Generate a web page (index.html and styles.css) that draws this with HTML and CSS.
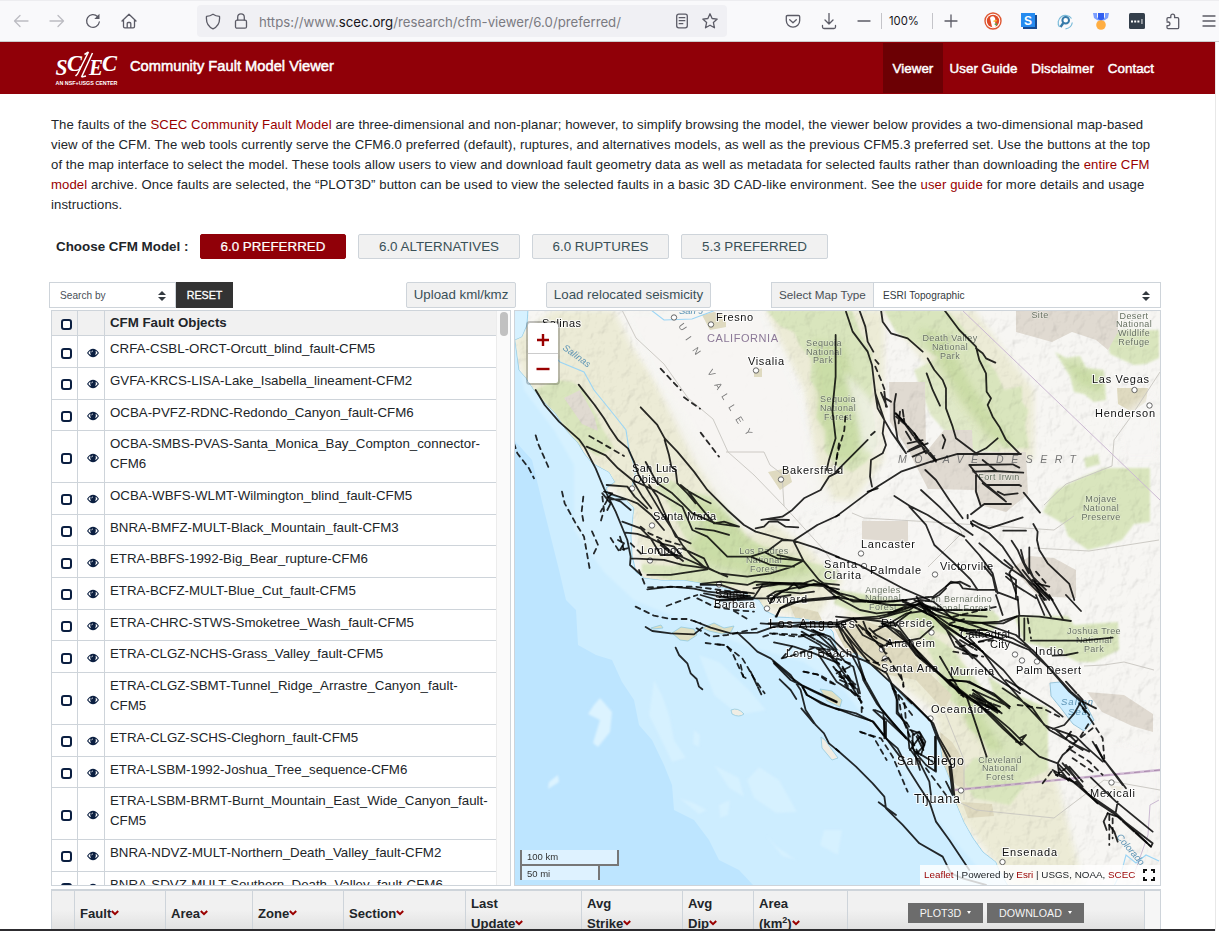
FILE: index.html
```html
<!DOCTYPE html>
<html lang="en">
<head>
<meta charset="utf-8">
<title>Community Fault Model Viewer</title>
<link rel="stylesheet" href="styles.css">
</head>
<body>
<svg width="0" height="0" class="defs" aria-hidden="true">
  <symbol id="eye" viewBox="0 0 12 10"><path d="M0 5Q6-3.400 12 5Q6 13.400 0 5Z" fill="#0b1f41"/><path d="M1.300 5Q2.300 3.200 3.400 2.700Q2.600 5.300 4 7.100Q2.300 6.500 1.300 5ZM10.700 5Q9.700 3.200 8.600 2.700Q9.400 5.300 8 7.100Q9.700 6.500 10.700 5Z" fill="#fff"/><path d="M4.500 4.300Q4.700 3 6 2.900" stroke="#fff" stroke-width=".7" fill="none"/></symbol>
  <symbol id="sort" viewBox="0 0 8 10"><path d="M0 4L4 0L8 4ZM0 6L4 10L8 6Z" fill="#343a40"/></symbol>
  <symbol id="chev" viewBox="0 0 8 6"><path d="M.8 1L4 4.200L7.200 1" fill="none" stroke="#990000" stroke-width="2"/></symbol>
</svg>

<div class="toolbar">
  <span class="tool"><svg width="16" height="16" viewBox="0 0 16 16" class="dim"><path d="M15 8H1.500M7 2.500L1.500 8L7 13.500"/></svg></span>
  <span class="tool"><svg width="16" height="16" viewBox="0 0 16 16" class="dim"><path d="M1 8H14.500M9 2.500L14.500 8L9 13.500"/></svg></span>
  <span class="tool"><svg width="16" height="16" viewBox="0 0 16 16"><path d="M14.300 9A6.400 6.400 0 1 1 12.500 3.500"/><path d="M14.500 .8V6H9.300Z" class="solid"/></svg></span>
  <span class="tool"><svg width="16" height="16" viewBox="0 0 16 16"><path d="M1 8L8 1.300L15 8M2.500 7V13.500Q2.500 14.800 3.800 14.800H12.200Q13.500 14.800 13.500 13.500V7M6.200 14.500V10.500Q6.200 9.500 7.200 9.500H8.800Q9.800 9.500 9.800 10.500V14.500"/></svg></span>
  <div class="urlbar">
    <span class="tool small"><svg width="16" height="17" viewBox="0 0 16 17"><path d="M8 1.200C10 2.600 12 3.200 14.500 3.300C15 8.500 13.500 13.500 8 15.800C2.500 13.500 1 8.500 1.500 3.300C4 3.200 6 2.600 8 1.200Z"/></svg></span>
    <span class="tool small"><svg width="14" height="17" viewBox="0 0 14 17"><rect x="1.500" y="7.200" width="11" height="8" rx="1.500"/><path d="M3.700 7V4.200A3.300 3.300 0 0 1 10.300 4.200V7"/></svg></span>
    <span class="url">https://www.<b>scec.org</b>/research/cfm-viewer/6.0/preferred/</span>
    <span class="tool small"><svg width="14" height="16" viewBox="0 0 14 16"><rect x="1.700" y="1.200" width="10.600" height="13.600" rx="2"/><path d="M4.200 4.700H9.800M4.200 7.700H9.800M4.200 10.700H7.800"/></svg></span>
    <span class="tool small"><svg width="16" height="16" viewBox="0 0 16 16"><path d="M8 .8L10.100 5.500L15.200 6.100L11.400 9.600L12.500 14.800L8 12.200L3.500 14.800L4.600 9.600L.8 6.100L5.900 5.500Z"/></svg></span>
  </div>
  <div class="tools">
    <span class="tool"><svg width="16" height="15" viewBox="0 0 16 15"><path d="M2.500 1.500H13.500Q14.700 1.500 14.700 2.700V6.500A6.700 6.700 0 0 1 1.300 6.500V2.700Q1.300 1.500 2.500 1.500ZM4.700 5.700L8 8.800L11.300 5.700"/></svg></span>
    <span class="tool"><svg width="16" height="17" viewBox="0 0 16 17"><path d="M8 .5V11M4 7L8 11L12 7M1.500 12.500V14Q1.500 15.500 3 15.500H13Q14.500 15.500 14.500 14V12.500"/></svg></span>
    <span class="tool minus"><svg width="14" height="14" viewBox="0 0 14 14"><path d="M1 7H13"/></svg></span>
    <span class="zoom">100%</span>
    <span class="tool"><svg width="14" height="14" viewBox="0 0 14 14"><path d="M1 7H13M7 1V13"/></svg></span>
    <span class="tool ddg"><svg width="18" height="18" viewBox="0 0 18 18" class="plain"><circle cx="9" cy="9" r="8" fill="#fff" stroke="#de5833" stroke-width="1.400"/><circle cx="9" cy="9" r="6.200" fill="#de4a26"/><path d="M6 6Q7 3.500 9.800 4.500Q12 6 11 9.500L12 14.600Q9.500 15.800 8 14.800Z" fill="#fff"/><path d="M9.500 8.500L13 7.800L12.500 9.500L9.500 10Z" fill="#f7b733"/><path d="M10 12L13 11V14Z" fill="#5ba14b"/></svg></span>
    <span class="tool"><svg width="16" height="16" viewBox="0 0 16 16" class="plain"><path d="M2 2H16V16H2Z" fill="#174a91"/><path d="M0 0H14V14H0Z" fill="#258bf0"/><text x="7" y="11.500" text-anchor="middle" class="s-logo">S</text></svg></span>
    <span class="tool"><svg width="16" height="17" viewBox="0 0 16 17" class="plain"><path d="M2.500 14A7.200 7.200 0 1 1 14.500 5.500" fill="none" stroke="#7abbd9" stroke-width="1.200"/><circle cx="8.700" cy="7.300" r="3.300" fill="#fff" stroke="#367aa9" stroke-width="2"/><path d="M6.300 10L3.500 14" stroke="#367aa9" stroke-width="2.300"/><path d="M8.500 15.800Q14.500 15 15.300 9.500" fill="none" stroke="#7abbd9" stroke-width="1.200"/></svg></span>
    <span class="tool"><svg width="16" height="17" viewBox="0 0 16 17" class="plain"><path d="M0 0H4V4L7 8L4 7L1 5ZM16 0H12V4L9 8L12 7L15 5Z" fill="#7b9fff"/><path d="M5 0H11V6L8 8L5 6Z" fill="#315ff0"/><circle cx="8" cy="12" r="4.800" fill="#ffae42"/></svg></span>
    <span class="tool"><svg width="16" height="16" viewBox="0 0 16 16" class="plain"><rect width="16" height="16" rx="1.500" fill="#343f4b"/><path d="M2 7.500h2v2H2zM5.200 7.500h2v2h-2zM8.400 7.500h2v2h-2zM12.500 6h.9v5h-.9z" fill="#fff"/></svg></span>
    <span class="tool"><svg width="16" height="17" viewBox="0 0 16 17"><path d="M2 7.500V5.800Q2 4.700 3 4.700H5.800V3A1.900 1.900 0 0 1 9.600 3V4.700H12.500Q13.700 4.700 13.700 6V14.500Q13.700 15.700 12.500 15.700H3Q2 15.700 2 14.600V12.700H3.500A1.900 1.900 0 0 0 3.500 9H2"/></svg></span>
    <span class="tool"><svg width="14" height="14" viewBox="0 0 14 14"><path d="M1 2H13M1 7H13M1 12H13"/></svg></span>
  </div>
</div>

<div class="page">
  <header class="masthead">
    <svg class="logo" width="64" height="38" viewBox="0 0 64 38">
      <g class="logo-text"><text x="0.500" y="26" font-size="24" textLength="12" lengthAdjust="spacingAndGlyphs">S</text><text x="12" y="21.500" font-size="23" textLength="15" lengthAdjust="spacingAndGlyphs">C</text><text x="34" y="26" font-size="23" textLength="14" lengthAdjust="spacingAndGlyphs">E</text><text x="47" y="21.500" font-size="23" textLength="15" lengthAdjust="spacingAndGlyphs">C</text></g>
      <path d="M33.500 3L22.500 25M37.500 4L26.500 28M29.500 5.500L33.500 3M22.500 25L20.500 27M26.500 28L31 27" stroke="#fff" stroke-width="1.500" fill="none"/>
      <text x="0.500" y="35.700" class="logo-caption" textLength="62" lengthAdjust="spacingAndGlyphs">AN NSF+USGS CENTER</text>
    </svg>
    <h1>Community Fault Model Viewer</h1>
    <nav>
      <a class="active">Viewer</a><a>User Guide</a><a>Disclaimer</a><a>Contact</a>
    </nav>
  </header>

  <main>
    <p class="intro">The faults of the <a>SCEC Community Fault Model</a> are three-dimensional and non-planar; however, to simplify browsing the model, the viewer below provides a two-dimensional map-based<br>view of the CFM. The web tools currently serve the CFM6.0 preferred (default), ruptures, and alternatives models, as well as the previous CFM5.3 preferred set. Use the buttons at the top<br>of the map interface to select the model. These tools allow users to view and download fault geometry data as well as metadata for selected faults rather than downloading the <a>entire CFM</a><br><a>model</a> archive. Once faults are selected, the “PLOT3D” button can be used to view the selected faults in a basic 3D CAD-like environment. See the <a>user guide</a> for more details and usage<br>instructions.</p>

    <div class="models">
      <strong>Choose CFM Model :</strong>
      <button class="model on">6.0 PREFERRED</button>
      <button class="model alt">6.0 ALTERNATIVES</button>
      <button class="model rup">6.0 RUPTURES</button>
      <button class="model old">5.3 PREFERRED</button>
    </div>

    <div class="controls">
      <div class="select search"><span>Search by</span><svg width="8" height="10"><use href="#sort"/></svg></div>
      <button class="reset">RESET</button>
      <button class="btn upload">Upload kml/kmz</button>
      <button class="btn seismic">Load relocated seismicity</button>
      <span class="maptype-label">Select Map Type</span>
      <div class="select maptype"><span>ESRI Topographic</span><svg width="8" height="10"><use href="#sort"/></svg></div>
    </div>

    <div class="panels">
      <div class="faults">
        <div class="list">
          <div class="row head"><i><b class="check"></b></i><i></i><span>CFM Fault Objects</span></div>
          <div class="row"><i><b class="check"></b></i><i><svg class="eye"><use href="#eye"/></svg></i><span>CRFA-CSBL-ORCT-Orcutt_blind_fault-CFM5</span></div>
          <div class="row"><i><b class="check"></b></i><i><svg class="eye"><use href="#eye"/></svg></i><span>GVFA-KRCS-LISA-Lake_Isabella_lineament-CFM2</span></div>
          <div class="row"><i><b class="check"></b></i><i><svg class="eye"><use href="#eye"/></svg></i><span>OCBA-PVFZ-RDNC-Redondo_Canyon_fault-CFM6</span></div>
          <div class="row two"><i><b class="check"></b></i><i><svg class="eye"><use href="#eye"/></svg></i><span>OCBA-SMBS-PVAS-Santa_Monica_Bay_Compton_connector-<br>CFM6</span></div>
          <div class="row"><i><b class="check"></b></i><i><svg class="eye"><use href="#eye"/></svg></i><span>OCBA-WBFS-WLMT-Wilmington_blind_fault-CFM5</span></div>
          <div class="row"><i><b class="check"></b></i><i><svg class="eye"><use href="#eye"/></svg></i><span>BNRA-BMFZ-MULT-Black_Mountain_fault-CFM3</span></div>
          <div class="row"><i><b class="check"></b></i><i><svg class="eye"><use href="#eye"/></svg></i><span>ETRA-BBFS-1992-Big_Bear_rupture-CFM6</span></div>
          <div class="row"><i><b class="check"></b></i><i><svg class="eye"><use href="#eye"/></svg></i><span>ETRA-BCFZ-MULT-Blue_Cut_fault-CFM5</span></div>
          <div class="row"><i><b class="check"></b></i><i><svg class="eye"><use href="#eye"/></svg></i><span>ETRA-CHRC-STWS-Smoketree_Wash_fault-CFM5</span></div>
          <div class="row"><i><b class="check"></b></i><i><svg class="eye"><use href="#eye"/></svg></i><span>ETRA-CLGZ-NCHS-Grass_Valley_fault-CFM5</span></div>
          <div class="row two"><i><b class="check"></b></i><i><svg class="eye"><use href="#eye"/></svg></i><span>ETRA-CLGZ-SBMT-Tunnel_Ridge_Arrastre_Canyon_fault-<br>CFM5</span></div>
          <div class="row"><i><b class="check"></b></i><i><svg class="eye"><use href="#eye"/></svg></i><span>ETRA-CLGZ-SCHS-Cleghorn_fault-CFM5</span></div>
          <div class="row"><i><b class="check"></b></i><i><svg class="eye"><use href="#eye"/></svg></i><span>ETRA-LSBM-1992-Joshua_Tree_sequence-CFM6</span></div>
          <div class="row two"><i><b class="check"></b></i><i><svg class="eye"><use href="#eye"/></svg></i><span>ETRA-LSBM-BRMT-Burnt_Mountain_East_Wide_Canyon_fault-<br>CFM5</span></div>
          <div class="row"><i><b class="check"></b></i><i><svg class="eye"><use href="#eye"/></svg></i><span>BNRA-NDVZ-MULT-Northern_Death_Valley_fault-CFM2</span></div>
          <div class="row"><i><b class="check"></b></i><i><svg class="eye"><use href="#eye"/></svg></i><span>BNRA-SDVZ-MULT-Southern_Death_Valley_fault-CFM6</span></div>
        </div>
        <div class="track"><div class="thumb"></div></div>
      </div>

      <div class="map">
        <svg class="canvas" width="645" height="574" viewBox="1 1 645 574">
          <defs>
            <filter id="relief" x="0" y="0" width="100%" height="100%"><feTurbulence type="fractalNoise" baseFrequency=".085 .07" numOctaves="4" seed="8"/><feDiffuseLighting surfaceScale="3" lighting-color="#fff" diffuseConstant="1.180"><feDistantLight azimuth="225" elevation="58"/></feDiffuseLighting></filter>
            <filter id="soft"><feGaussianBlur stdDeviation="3"/></filter>
            <filter id="softer"><feGaussianBlur stdDeviation="1.200"/></filter>
            <path id="land" d="M14 0L13 15L8 27L1 30L5 60L12 68L20 80L30 92L42 104L52 120L64 133L70 143L78 153L95 162L101 172L92 178L95 185L110 188L120 198L117 225L118 245L122 262L130 268L148 270L170 270L200 275L230 283L245 290L252 301L264 307L284 308L310 312L319 322L322 338L330 345L342 343L355 353L377 373L394 392L415 408L425 428L429 452L437 472L440 488L450 512L459 528L469 542L482 552L485 560L494 576H648V0Z"/>
            <clipPath id="landclip"><use href="#land"/></clipPath>
          </defs>
          <rect width="648" height="577" fill="#bde5ff"/>
          <path d="M14 0H0V130L18 150L30 200L45 260L52 290L62 300L64 335L82 345L98 350L108 372L120 390L125 415L138 430L150 455L158 475L160 500L180 510L195 530L205 550L225 560L240 576H648V0Z" fill="#cdedff"/>
          <path d="M0 30L10 80L40 120L60 155L60 220L90 262L120 290L180 315L230 335L290 352L330 380L360 420L400 480L440 530L480 576H500V0H0Z" fill="#d6f1ff" filter="url(#softer)"/>
          <g fill="#dcf3ff" filter="url(#softer)"><path d="M80 395L86 388L98 402L96 422L84 437L79 433L86 410L74 404ZM35 472L44 465L45 472L34 479Z"/><path opacity=".6" d="M140 370L148 385L155 405L160 430L172 448L158 452L145 425L135 405ZM185 345L205 352L235 380L252 400L225 405L200 385ZM180 420L186 425L185 437L179 434ZM245 457L265 470L283 502L262 503L240 488L233 470ZM200 455L225 468L230 487L215 478ZM205 495L216 490L214 505L206 508ZM310 520L328 520L324 545L306 535ZM165 488L180 493L193 500L185 504ZM252 525L262 536L282 550L268 546Z"/></g>
          <use href="#land" fill="#f4f3ef" stroke="#8fcbe8" stroke-width="1"/>
          <g clip-path="url(#landclip)">
            <g fill="#ecebd6" filter="url(#soft)">
              <path d="M0 30L40 0H100L120 40L165 100L215 180L290 235L330 270L300 310L130 270L118 200L60 130L10 70ZM330 300L430 310L480 420L540 460L570 576H500L440 500L420 400L340 340ZM250 0H370V150L340 190L300 190L290 80ZM370 0H460L520 80L520 150L480 145Z"/>
            </g>
            <g fill="#d9e5bd" filter="url(#softer)">
              <path d="M20 80L43 70L58 72L70 80L78 96L88 118L100 138L84 146L66 135L52 118L38 100Z"/>
              <path d="M148 166L160 172L178 182L196 186L214 196L222 212L232 226L250 238L270 246L294 252L312 256L324 262L322 272L296 278L270 286L250 276L230 274L205 276L182 278L128 262L128 254L160 256L185 244L170 226L160 205L152 188L142 178Z"/>
              <path d="M252 0H338L346 22L358 44V96L364 134L352 152L338 162L322 156L310 140L312 120L302 108L306 84L296 70L298 50L286 36L280 22L266 16Z"/>
              <path d="M370 0H432L446 14L458 30L470 46L482 62L490 80L508 76L508 92L514 100L511 115L515 138H488L480 120L470 110L455 90L438 66L426 48L404 36L382 22Z"/>
              <path d="M440 40L470 55L482 100L486 142L440 140L430 120L416 104L410 88L400 60Z" opacity=".8"/>
              <path d="M541 42L552 48L566 46L572 58L590 60L592 90L580 92L570 84L560 82L556 66Z"/><path d="M592 26L608 20H645V48L632 54L620 55L596 44Z"/>
              <path d="M529 202L535 190L542 180L566 168L590 158H636V212L620 214L608 230L590 236L574 240L554 226L550 214ZM570 148L584 144L586 154L572 158Z"/>
              <path d="M322 280L350 284L382 290L400 300L426 306L450 300L478 300L486 308L480 320L462 328L430 324L410 316L392 310L350 306L320 294Z"/>
              <path d="M500 306H554L560 315L604 312L605 340L580 352L564 352L550 345L540 340L510 332Z"/>
              <path d="M404 318L425 330L440 340L446 350L456 362L470 380L490 392L494 410L498 428L488 440L476 448L470 430L454 418L450 400L430 386L420 352Z"/>
              <path d="M474 366L500 384L534 398L534 460L510 472L496 456L480 450L488 410Z"/>
              <path d="M460 448L502 444L510 476L496 495L460 488L446 466Z"/>
            </g>
            <g fill="#b9d28c" opacity=".45" filter="url(#soft)">
              <path d="M180 188L218 204L238 232L290 250L300 262L260 270L200 255L170 240L190 218ZM298 30L330 34L350 110L342 150L320 150L304 105ZM404 18L432 26L455 72L482 112L500 138L474 126L446 90ZM550 50L585 65L588 82L566 75ZM330 285L380 295L430 300L470 308L462 320L420 316ZM430 350L450 372L470 410L490 440L474 440L450 410Z"/>
            </g>
            <g fill="#e0dad1">
              <path d="M50 88L66 80L80 106L84 121L68 114Z"/>
              <path d="M375 72H411L412 142L430 120H458L459 142H512L514 184L492 202L466 195L460 180L414 179L394 140L376 112Z"/>
              <path d="M348 211H394V232L348 229ZM502 0H604V22L594 40L582 30L558 22L538 32L502 22ZM516 246L540 248L562 260V288L524 286L498 258Z"/>
              <path d="M573 382L610 385L639 404V422L618 416L588 402Z"/>
            </g>
            <g fill="#dfdac0">
              <path d="M188 5H212V17L196 20ZM254 162L274 158L278 172L266 180ZM603 78H634L632 92L618 102L604 94ZM240 61L248 58V67H240ZM320 318L348 310L388 324L404 352L438 385L430 400L402 370L370 364L334 344ZM426 422L438 432L448 448L452 480L442 475L430 460ZM448 492L478 494L480 506L454 508ZM595 475L610 477L602 485ZM152 326L160 322L180 324L178 331L164 333ZM276 295L304 302L312 318L284 315Z"/>
            </g>
            <rect width="648" height="577" filter="url(#relief)" class="shade"/>
            <g fill="#f6f5f3" filter="url(#soft)" opacity=".9">
              <path d="M108 0H250L262 30L290 90L305 160L320 190L290 205L262 210L235 225L215 205L180 150L150 90Z"/>
              <path d="M300 250L330 225L370 205L420 215L440 260L400 280L350 262ZM330 60L366 100L368 150L350 140ZM570 440L600 430L646 440V530L600 500L570 460ZM600 110L640 80L645 150L610 150Z" opacity=".7"/>
            </g>
            <g fill="#dfdac0"><path d="M188 5L200 2L212 6V17L196 20ZM254 162L274 158L278 172L266 180ZM240 61L248 58V67H240Z"/></g>
            <path d="M348 211H394V232L348 229Z" fill="#e0dad1"/>
          </g>
          <g fill="#dfdfc2" stroke="#93cae0" stroke-width=".8"><path d="M137 318L147 315L149 318L139 319ZM158 323L167 317L180 319L183 325L174 331L166 330ZM188 318L200 313L210 318L220 316L217 322L208 324L195 321ZM306 379L318 381L328 390L326 397L313 391Z"/><path d="M307 427L311 430L324 448L318 450L308 438ZM217 400Q224 397 230 404Q225 408 218 404Z" fill="#f0ede4"/></g>
          <path d="M536 373L546 372L558 383L572 395L580 410L570 421L559 414L546 397L537 386Z" fill="#cdedff" stroke="#9ac5da"/>
          <g fill="none" stroke="#9bd5f5" stroke-width="1.100"><path d="M28 32L46 52L70 62L80 80L101 106L112 120L115 140L122 160L118 178"/><path d="M137 0L150 10L178 9L202 0M600 576L608 560L612 545L622 553L632 545L645 551"/></g>
          <g fill="none" stroke="#c7c5bf" stroke-width=".9"><path d="M108 0L122 28L150 54L174 88L199 109L214 142L240 165L270 196L310 240L330 270M212 142H250L256 155L268 164L270 196M338 203L350 208L418 212L540 220L560 206M520 238L575 241L645 230M530 195L552 174L598 156L600 130L616 108L646 62M414 257L448 223L440 210M440 490L462 500L540 508L590 470L646 480M430 400L450 450L450 490M570 356L590 355L610 352L640 360"/></g>
          <path d="M448 0L646 190" stroke="#cbb9d2" fill="none"/><path d="M441 480L646 460" stroke="#c6a9cb" stroke-width="2.400" opacity=".8"/><path d="M441 480L646 460" stroke="#a98bac" stroke-dasharray="6 4"/>
          <path d="M645 490L636 495L634 525L618 570" stroke="#cbb9d2" fill="none"/>

          <g class="towns" fill="#fff" stroke="#555" stroke-width=".9"><circle cx="160" cy="7.500" r="2.700"/><circle cx="197" cy="14.500" r="2.700"/><circle cx="242" cy="60.500" r="2.700"/><circle cx="267" cy="169.500" r="2.700"/><circle cx="118" cy="178.500" r="2.700"/><circle cx="138" cy="215.500" r="2.700"/><circle cx="136" cy="250.500" r="2.700"/><circle cx="205" cy="274.500" r="2.700"/><circle cx="347" cy="243.500" r="2.700"/><circle cx="350" cy="256" r="2.700"/><circle cx="421" cy="264.500" r="2.700"/><circle cx="620.500" cy="80" r="2.700"/><circle cx="635.500" cy="95.500" r="2.700"/><circle cx="253" cy="298.500" r="2.700"/><circle cx="417.500" cy="322.500" r="2.700"/><circle cx="368" cy="339.500" r="2.700"/><circle cx="371" cy="348.500" r="2.700"/><circle cx="501" cy="344.500" r="2.700"/><circle cx="508" cy="350.500" r="2.700"/><circle cx="523" cy="351.500" r="2.700"/><circle cx="416.500" cy="408.500" r="2.700"/><circle cx="447" cy="480.500" r="2.700"/><circle cx="597.500" cy="472.500" r="2.700"/><circle cx="488.500" cy="552" r="2.700"/></g>

          <g class="place">
            <text x="28" y="17" textLength="39">Salinas</text><text x="202" y="11" textLength="37">Fresno</text><text x="234" y="55" textLength="36">Visalia</text><text x="268" y="164" textLength="61">Bakersfield</text><text x="118" y="162" textLength="45">San Luis</text><text x="119" y="173" textLength="36">Obispo</text><text x="139" y="210" textLength="63">Santa Maria</text><text x="127" y="244" textLength="41">Lompoc</text><text x="347" y="238" textLength="54">Lancaster</text><text x="310" y="258" textLength="33">Santa</text><text x="310" y="269" textLength="37">Clarita</text><text x="356" y="264" textLength="51">Palmdale</text><text x="426" y="260" textLength="53">Victorville</text><text x="578" y="73" textLength="57">Las Vegas</text><text x="581" y="107" textLength="60">Henderson</text><text x="201" y="288" textLength="30">Santa</text><text x="200" y="298" textLength="41">Barbara</text><text x="253" y="293" textLength="40">Oxnard</text><text x="255" y="318" textLength="86" class="big">Los Angeles</text><text x="272" y="347" textLength="66">Long Beach</text><text x="367" y="317" textLength="51">Riverside</text><text x="372" y="337" textLength="49">Anaheim</text><text x="367" y="362" textLength="57">Santa Ana</text><text x="436" y="365" textLength="44">Murrieta</text><text x="446" y="328" textLength="50">Cathedral</text><text x="476" y="338" textLength="20">City</text><text x="521" y="345" textLength="28">Indio</text><text x="502" y="364" textLength="65">Palm Desert</text><text x="417" y="403" textLength="59">Oceanside</text><text x="383" y="455" textLength="67" class="big">San Diego</text><text x="400" y="493" textLength="46" class="big">Tijuana</text><text x="576" y="487" textLength="45">Mexicali</text><text x="488" y="546" textLength="55">Ensenada</text>
          </g>
          <g class="park">
            <text x="310" y="36">Sequoia</text><text x="310" y="45">National</text><text x="309" y="53">Park</text><text x="324" y="92">Sequoia</text><text x="324" y="101">National</text><text x="324" y="110">Forest</text><text x="436" y="31">Death Valley</text><text x="436" y="40">National</text><text x="436" y="49">Park</text><text x="526" y="7.500">Site</text><text x="620" y="9">Desert</text><text x="620" y="17">National</text><text x="620" y="26">Wildlife</text><text x="620" y="35">Refuge</text><text x="587" y="192">Mojave</text><text x="587" y="201">National</text><text x="587" y="210">Preserve</text><text x="485" y="170">Fort Irwin</text><text x="250" y="244">Los Padres</text><text x="250" y="253">National</text><text x="250" y="262">Forest</text><text x="369" y="283">Angeles</text><text x="369" y="291">National</text><text x="369" y="300">Forest</text><text x="444" y="292">San Bernardino</text><text x="444" y="301">National Forest</text><text x="580" y="324">Joshua Tree</text><text x="580" y="333">National</text><text x="580" y="342">Park</text><text x="486" y="453">Cleveland</text><text x="486" y="461">National</text><text x="486" y="470">Forest</text>
          </g>
          <text x="193" y="32" class="state" textLength="71">CALIFORNIA</text>
          <text x="384" y="153" class="desert" textLength="178">MOJAVE DESERT</text>
          <g class="valley"><text transform="translate(164 16) rotate(55)">U</text><text transform="translate(171 29) rotate(55)">I</text><text transform="translate(178 40) rotate(55)">N</text><text transform="translate(193 62) rotate(58)">V</text><text transform="translate(200 75) rotate(58)">A</text><text transform="translate(207 86) rotate(58)">L</text><text transform="translate(214 97) rotate(58)">L</text><text transform="translate(221 109) rotate(58)">E</text><text transform="translate(230 121) rotate(58)">Y</text></g>
          <g class="water"><text transform="translate(48 39) rotate(36)" textLength="32">Salinas</text><text x="547" y="395" textLength="32">Salton</text><text x="554" y="404.500" textLength="19">Sea</text><text transform="translate(602 527) rotate(50)" textLength="38">Colorado</text><text x="165" y="4">San J</text></g>

          <g class="fault">
            <g transform="scale(.3333)">
              <path d="M65 240L92 285L135 335L195 388L212 412L245 475L270 535L305 605L340 690L350 740L348 765L382 795M194 224L242 285L270 325L288 355L312 390L342 415L360 455L374 495L395 530L440 605L480 665L505 705L530 735L570 770L640 800M218 410L275 436L312 475L355 510L430 545L505 590L535 660L580 680L640 740H710L758 725L805 690L838 692L910 645L975 615M380 292L430 345L452 385L490 425L540 485L580 540L640 600L690 645L725 665L808 688L838 692L910 715L975 742M452 390L465 435L472 470L485 480L490 520L520 550L545 580M500 525L525 545L570 570L590 580M278 525L340 530L362 560L400 595M395 456L430 520L475 550L510 585L535 610L570 625L605 640L675 650M405 525L430 560L450 605L485 680L530 700M355 510L385 560L412 595M285 550L345 570L370 580L412 615L450 660M280 560L320 575L350 600M290 568H335M325 635L380 655L410 685L440 700L480 710L505 740M335 668L370 672L410 685L440 735L490 735L580 775M350 745L450 750L505 765L580 775M400 795H470L535 785L580 778M505 715L570 745L585 775L615 790L700 800L770 790L835 770L868 752M710 740L770 765L840 770M758 730L790 745L868 752M868 752L915 810L945 832L975 838M790 735L868 752M838 692L870 755M965 75V200L955 300L965 385L945 450L938 480M975 485L945 500L920 540L870 565L835 600L805 620L742 630M768 628L825 630M725 655L750 650L765 635H792L815 650L853 652M560 822L620 815L700 825L725 815L830 822L860 820L895 825L930 820L975 825M520 540L550 580L575 610L600 640L630 635L675 650M545 655L600 662L645 675"/>
              <path d="M440 176L500 240M510 262L558 296M560 368L615 440M226 378L330 438M65 376L72 400L85 430L108 482M0 400L10 430L45 475L60 505M144 545L152 580L185 640L210 680L228 782M208 560L203 605L210 645M265 560L270 600L260 635M280 570L260 605M234 664L252 705L235 740M290 684L318 728M318 680L330 720M350 700L390 740M380 650L405 670L450 690L500 705M375 780L395 830M402 832L540 830L700 850M975 400L965 465" class="dash"/>
              <path d="M265 550L290 580L280 600M270 545L295 550L280 565M560 825H620L680 845L720 850M400 838L470 830L540 836L580 845L700 858M570 850L650 865L720 862L745 825L800 820M760 860L785 845L820 840L840 820L855 835L900 822L930 825L975 850M770 870L805 845L860 850L900 845"/>
              <path d="M312 690L330 700L318 720L340 715M432 690L465 720L510 755M440 705L490 745" class="heavy"/>
            </g>
            <g transform="translate(322 0) scale(.3333)">
              <path d="M30 5L50 65L95 125L108 165L118 250L145 330L140 370L150 405L140 430L105 450L102 500L108 530M70 0L88 50L95 95L112 125M135 0L140 35L165 70L215 85L260 125M325 0L370 60L420 110L430 150L450 190L452 245L465 265L455 285L470 320L490 350L510 390L550 430M420 115L440 130L450 145L478 158M275 145L295 180L320 210L330 235V295L350 350L360 385L420 430L450 415L485 385M272 190L290 240L312 287M180 252L175 280V325L185 390L210 430M118 250L125 295L165 365L210 430M0 620L100 545L195 485L285 455L365 432H555M268 480L300 510L340 570L380 625M255 540L310 590L360 640L410 675M175 558L225 590L275 615L330 650L385 680M220 590L270 645L295 705L350 755L405 810L425 840M390 690L430 735L470 790L485 850M430 700L500 760L560 800L600 830L640 870M405 640L460 670L500 710L540 770L580 820L630 870M410 632L425 640L460 655M460 655L560 622M502 662H570M563 548L612 608M592 642L605 665L603 690L610 720L635 760L700 822L715 870M400 465L420 490V545L435 590M400 465L530 463L550 473M412 485L470 483L562 488M440 450L482 484M452 525H550L555 528M440 520L510 575M410 480L440 515L505 570M485 545L505 555L545 550M405 613L445 582H525M527 692L545 720L560 755L578 790M555 720L565 760L590 800L630 840M580 712V775L600 820L640 865M505 750L530 772L520 790L540 850M510 800L545 830L600 865M0 485L30 455L95 390M445 770L470 800L480 845L520 860L545 870M0 740L70 765L125 795L200 835L280 870M425 840H480M330 830L345 815L370 820L380 835L425 840M330 835L310 855L290 865M320 375L328 390L320 415"/>
              <path d="M118 150L135 170M118 170L135 210L150 250M28 320L25 360L5 430L0 455M105 375L125 358M405 635L415 660M600 785L630 820" class="dash"/>
              <path d="M135 248L155 295M145 245L150 290M140 260L165 275M178 310L205 335L200 300M180 320L215 350M192 305L188 340M205 340L245 395L300 455M215 400L262 390M220 420L260 400M215 425L275 400M235 370L270 430M95 545L125 535M395 615V625" class="heavy"/>
              <path d="M210 365L225 390M180 310L230 365L300 450M230 440L265 425M510 790L540 810V865M560 780L600 830L625 870M590 810L650 870M600 820L640 830" class="heavy"/>
            </g>
            <g transform="translate(0 285) scale(.3333)">
              <path d="M395 96L415 108L470 115L540 118L565 98M540 78L590 98L650 115L730 113L780 95L975 95M670 113L705 145L730 170L770 190L830 240L860 285L875 345L905 390L930 415L945 445L975 470M485 158L495 180L520 205L530 235L548 252L555 275L565 283M780 142L840 155L900 175L975 205M780 205L830 255L900 290L968 322M862 270L880 300L920 325L975 345M797 253L830 285L847 312M862 340L900 385M740 85L780 88L830 95L870 85L975 88M785 65L800 40L830 28L865 15L975 5M560 0L610 15L690 10L770 10L830 0"/>
              <path d="M365 35L420 62L470 72L520 72L560 85M458 33L520 10L550 0M548 100L590 125L640 120L740 98M575 144L625 150M640 155L685 190L700 215L720 250L752 295M680 210L688 245L705 255M748 125L780 115L860 120L930 118M870 230L910 238L945 262L975 272M550 10L600 35L660 45L720 50M660 48L700 72M806 188L838 150" class="dash"/>
              <path d="M710 230L742 298M640 155L650 168M610 148L630 150" class="heavy"/>
            </g>
            <g transform="translate(206 260) scale(.3333)">
              <path d="M110 45L150 38L250 40L280 30L310 45L360 70L400 80L420 90L510 105L600 105L660 118L720 135L800 140M100 55L180 42L230 45L260 42M150 100L165 75L200 58L270 45L310 48L350 82L420 120L470 130L520 125L600 90L640 95L660 110L700 150L800 160L850 160L890 140M170 140L180 115L210 98L270 92L350 85M145 160L240 158L350 158L400 145L470 140L520 130L590 105M330 60L370 80L400 95H520L590 85L640 80L690 40L720 35L750 50M350 160L400 220L450 280L515 340L575 395L640 460L655 500L690 560M355 170L375 210L410 255L435 330M245 195L300 225L350 280L400 350M240 170L290 190L345 240L375 275L400 290L420 370M275 180L330 200L380 250L440 275L500 310L515 340M300 260L350 335L420 380M365 175L410 250L430 330L470 400L510 450L575 520L600 600M160 275L210 320L245 345L350 395M245 345L260 375L320 405L400 435L460 455L495 500L540 560M465 420L490 430L495 500M490 440L575 520M515 340L530 375L530 430L560 460M515 340L575 400M590 105L620 120L680 180L760 260L820 320L900 370M600 90L660 160L700 185L770 230L850 300L900 360M540 185L600 260L670 320L760 390L820 440L900 520M520 175L600 250L690 345L760 390M485 160L540 185L600 265M680 180L705 230L770 260M460 185L500 165L560 130L630 120M430 155L440 180L455 200M690 330L740 335L820 370L870 410M760 360L820 410L845 430M800 560L740 380M500 220L550 215L600 205L640 170M500 225L480 230M645 500V600M570 540L600 500L610 530L590 550"/>
              <path d="M400 145L430 180L480 225L500 250M415 165L470 205M430 175L490 240L550 335V350M500 265L470 280L440 270M250 305L300 315L340 340M350 265L390 280M350 310L390 290M360 330L395 345M375 345L425 395V430M420 485L460 500L500 570M535 375L545 440L570 500L600 560M550 400L580 440M150 190L230 200L300 195M185 265L240 250L290 230M40 255L70 320M720 230L780 215L830 210M700 245L790 260M690 160L740 145M700 140L830 110M330 250L380 310L410 360M340 290L400 370" class="dash"/>
              <path d="M245 185L340 240M280 180L330 210L350 240M290 235L350 270M270 230L330 240M360 310L380 340M390 340L420 390M340 80L400 90L480 100M400 90L490 95L560 90M505 130L600 100M610 110L690 165L730 175M660 260L730 380M750 375L835 430M760 370L830 415M770 385L840 410M720 210L770 240M740 190L800 200M720 180H800M590 80L620 130M0 65L80 68M0 80L90 78M0 92L100 88M590 500L610 540M570 480L600 490L610 520" class="heavy"/>
            </g>
            <g transform="translate(322 285) scale(.3333)">
              <path d="M0 90L50 72L130 70L220 45L250 25L300 60L400 85L490 80L550 62L610 65L705 78M0 65L55 70L80 72L180 85L225 50M200 15L300 70L370 120L440 170L490 240L560 320L640 405L720 450L760 470M270 35L380 80L450 105L530 130L590 165L650 230L705 290L740 320L750 340M340 90L420 110L520 140L580 165L640 220L700 290L735 320L715 355L685 390L650 402M440 85L540 120L600 175M140 85L210 140L240 180L330 255L380 300L460 350L520 400L560 440L610 485L665 505L700 540M185 90L260 190L340 265L430 330L500 400L555 450M330 255L400 260L480 305L520 340M410 285L520 335M375 300L450 330L490 350M510 255L570 290L650 340L680 365M500 280L590 340L625 390L660 405L700 440L740 465M635 395L720 425L750 455L800 500M585 137H740L830 128M650 182L690 180L725 173M550 430L570 420L550 445M540 440L560 448M548 65L550 130M565 70V135M610 0L645 65M690 0L735 48M480 0L500 60M545 5L550 60M600 0L625 60M640 0L680 70M0 340L60 355L110 380L150 430L185 460L215 520L250 575L280 620L300 680L340 735L370 780L400 825M0 462L60 515L110 565L145 605L150 640L200 690L250 745L320 785L345 835L380 850L450 870M50 185L90 260L135 340L210 430M112 345L145 375V430M165 265L185 320V350L215 400L220 460L250 500L280 560L285 600M215 310L285 380L300 420L345 510L355 600M300 420V530L270 510L245 480L230 460V420L250 410L268 440L255 480M340 515L350 600L330 560M128 622L180 660M710 455L680 480L665 505L670 540M665 540L710 560L760 600L840 655L945 755L950 745L840 660L780 620L700 550M765 548L840 620L950 710M770 440L800 490L840 540L870 580M800 490L860 570M815 655L803 680L812 705M845 620L838 660M820 690L835 710L845 740M60 90L80 120L140 150M20 90L80 170L130 210M100 100L120 120L165 145M130 95L180 90"/>
              <path d="M75 412L135 430L170 485L215 590M170 280L205 320L210 380L240 430M740 340L765 375L730 430L690 470M765 375L800 430L805 490M770 400L700 455M620 565L650 525L670 550M705 465L760 500L800 540M710 490L770 530M820 660V750M830 670V730M545 330L620 340L680 370M0 225L60 270L80 340M10 245L50 260M20 215L60 290M195 240L203 275M270 520L330 600M575 70L585 130" class="dash"/>
              <path d="M650 525L730 570M660 540L690 520M690 510L720 550M700 515L740 560M670 520L700 560M680 505L740 575M720 560L785 625M410 300L490 350M415 320L480 345M730 325L760 360M345 90L390 110M360 140L410 190M375 105L500 130M400 130L440 170M430 140L470 130M340 260L370 295M700 420L720 440M705 410L690 430M245 420L265 450M240 470L290 500M150 380L150 430M235 15L300 45L450 45M200 20L300 70M815 655L845 665L945 755M740 320L780 340M690 260L740 315M780 450L805 500" class="heavy"/>
            </g>
          </g>
        </svg>
        <div class="zoomctl"><span><svg width="14" height="14"><path d="M7 1V13M1 7H13"/></svg></span><span><svg width="14" height="14"><path d="M0.500 7H13.500"/></svg></span></div>
        <div class="scale"><div class="km">100 km</div><div class="mi">50 mi</div></div>
        <div class="attrib"><span><a>Leaflet</a> | Powered by <a>Esri</a> | USGS, NOAA, <a>SCEC</a></span><svg width="12" height="12"><path d="M1 4V1H4M8 1H11V4M11 8V11H8M4 11H1V8" fill="none" stroke="#111" stroke-width="2"/></svg></div>
      </div>
    </div>

    <div class="table">
      <div class="c0"></div>
      <div class="c1">Fault<svg class="chev"><use href="#chev"/></svg></div>
      <div class="c2">Area<svg class="chev"><use href="#chev"/></svg></div>
      <div class="c3">Zone<svg class="chev"><use href="#chev"/></svg></div>
      <div class="c4">Section<svg class="chev"><use href="#chev"/></svg></div>
      <div class="c5 tall"><span>Last<br>Update<svg class="chev"><use href="#chev"/></svg></span></div>
      <div class="c6 tall"><span>Avg<br>Strike<svg class="chev"><use href="#chev"/></svg></span></div>
      <div class="c7 tall"><span>Avg<br>Dip<svg class="chev"><use href="#chev"/></svg></span></div>
      <div class="c8 tall"><span>Area<br>(km<sup>2</sup>)<svg class="chev"><use href="#chev"/></svg></span></div>
      <div class="c9"><button>PLOT3D<em></em></button><button class="dl">DOWNLOAD<em></em></button></div>
      <div class="c10"></div>
    </div>
  </main>
  <div class="window-edge"></div>
</div>
</body>
</html>
```
FILE: styles.css
```css
* { box-sizing: border-box; }
html, body { height: 931px; overflow: hidden; }
body { margin: 0; font: 13.4px/20px "Liberation Sans", Arial, sans-serif; color: #212529; background: #fff; }
button { font: inherit; margin: 0; cursor: pointer; white-space: nowrap; }
a { color: #990000; }
.defs { position: absolute; }

/* browser toolbar */
.toolbar { height: 42px; display: flex; align-items: center; padding-left: 3px; background: #f9f9fb; border-top: 1px solid #ededf0; border-bottom: 1px solid #ccc; }
.tool { width: 36px; flex: none; display: flex; justify-content: center; align-items: center; }
.tool svg { fill: none; stroke: #5b5b66; stroke-width: 1.3; stroke-linecap: round; stroke-linejoin: round; }
.tool svg.dim { stroke: #bcbcc2; }
.tool svg .solid { fill: #5b5b66; stroke: none; }
.tool svg.plain { stroke: none; stroke-linejoin: miter; stroke-linecap: butt; }
.tool.small { width: 28px; }
.tool.minus { width: 34px; }
.tool.ddg { margin-left: 6px; }
.urlbar { flex: none; width: 530px; height: 32px; margin-left: 50px; padding: 0 3px 0 2px; display: flex; align-items: center; background: #f0f0f4; border-radius: 4px; }
.url { flex: 1; padding: 1px 0 0 4px; font: 13.22px/20px Inter, "Liberation Sans", sans-serif; color: #7b7b82; white-space: nowrap; }
.url b { font-weight: 400; color: #15141a; }
.tools { flex: none; display: flex; align-items: center; margin-left: 48px; }
.zoom { width: 52px; height: 16px; padding-right: 6px; border: solid #c4c4c9; border-width: 0 1px; text-align: center; font: 11.3px/16px Inter, sans-serif; color: #15141a; }
.s-logo { font: bold 12px "Liberation Sans", sans-serif; fill: #fff; }

.page { position: relative; width: 1216px; height: 889px; border-right: 1px solid #e8e8e8; overflow: hidden; }
.masthead { width: 1215px; height: 52px; display: flex; align-items: flex-start; padding: 1px 54px 0 55px; background: #900008; color: #fff; }
.logo { flex: none; margin-top: 6px; }
.logo-text text { font-family: "Liberation Serif", serif; font-style: italic; font-weight: bold; fill: #fff; }
.logo-caption { font: bold 5.3px "Liberation Sans", sans-serif; fill: #fff; }
.masthead h1 { margin: 13px 0 0 11px; font-size: 14.7px; line-height: 20px; font-weight: 400; -webkit-text-stroke: .5px #fff; white-space: nowrap; }
.masthead nav { margin-left: auto; height: 50px; display: flex; }
.masthead nav a { padding: 0 7px; line-height: 51px; color: #fff; -webkit-text-stroke: .45px #fff; white-space: nowrap; }
.masthead nav a.active { width: 60px; padding-left: 10px; background: #6c0004; }

main { width: 1112px; margin-left: 49px; }
.intro { margin: 21px 0 0 2px; white-space: nowrap; font-size: 13.15px; letter-spacing: .088px; }
.models { height: 25px; margin: 19px 0 0 7px; display: flex; align-items: center; }
.models strong { width: 144px; flex: none; }
.model { height: 25px; padding: 0; border: 1px solid #ced4da; border-radius: 2px; background: #f1f1f1; color: #395057; line-height: 22px; }
.model.on { width: 146px; background: #900008; border-color: #900008; color: #fff; -webkit-text-stroke: .2px #fff; }
.model.alt { width: 162px; margin-left: 12px; }
.model.rup { width: 137px; margin-left: 12px; }
.model.old { width: 147px; margin-left: 12px; }

.controls { display: flex; height: 26px; margin-top: 23px; }
.select { display: flex; align-items: center; justify-content: space-between; padding: 1px 10px 0; font-size: 10.1px; letter-spacing: .02px; border: 1px solid #ced4da; color: #495057; }
.select.search { width: 127px; padding-right: 9px; }
.reset { width: 57px; padding: 0; border: 0; background: #333; color: #fff; font-size: 10.7px; line-height: 24px; -webkit-text-stroke: .3px #fff; }
.btn { padding: 0; border: 1px solid #ced4da; border-radius: 2px; background: #f1f1f1; color: #395057; font-size: 13.3px; }
.upload { width: 110px; margin-left: 173px; }
.seismic { width: 165px; margin-left: 30px; }
.maptype-label { width: 102px; margin-left: 60px; padding-left: 7px; border: 1px solid #ced4da; border-right: 0; background: #f1f1f1; color: #495057; font-size: 11.7px; line-height: 24px; white-space: nowrap; }
.select.maptype { width: 288px; padding-left: 9px; color: #343a40; }

.panels { display: flex; justify-content: space-between; margin: 2px 0 0 2px; width: 1110px; height: 576px; }
.faults { width: 460px; border: 1px solid #ced4da; display: flex; overflow: hidden; }
.list { width: 444px; height: 574px; overflow: hidden; }
.row { display: flex; height: 31.7px; border-bottom: 1px solid #ced4da; }
.row i { width: 26px; flex: none; border-right: 1px solid #ced4da; display: flex; align-items: center; justify-content: center; padding-top: 3px; }
.row i + i { width: 27px; padding: 2px 0 0 4px; }
.row i:first-child { padding-left: 4px; }
.row span { padding: 3px 0 0 5px; white-space: nowrap; font-size: 13.3px; }
.row.two { height: 51.8px; }
.row.head { height: 25.2px; background: #f1f1f1; font-weight: bold; }
.row.head span { padding-top: 2px; }
.check { width: 11px; height: 11px; border: 2px solid #0b1f41; border-radius: 3px; background: #fff; }
.eye { width: 12px; height: 10px; }
.track { width: 14px; border-left: 1px solid #ececec; background: #fafafa; padding: 1px 0 0 3px; }
.thumb { width: 8px; height: 24px; border-radius: 4px; background: #c1c1c1; }

/* map */
.map { position: relative; width: 647px; border: 1px solid #ced4da; overflow: hidden; }
.canvas { display: block; }
.shade { mix-blend-mode: multiply; opacity: .26; }
.fault { fill: none; stroke: #000; stroke-opacity: .84; stroke-width: 5.4; stroke-linejoin: round; stroke-linecap: round; }
.fault .dash { stroke-dasharray: 15 14; }
.fault .heavy { stroke-width: 5.6; stroke-dasharray: 46 6; }
.place text, .park text { paint-order: stroke; stroke: #fff; stroke-opacity: .8; stroke-width: 2px; font-family: "Liberation Sans", Arial, sans-serif; }
.place text { font-size: 11px; fill: #111; }
.place .big { font-size: 12.5px; }
.park text { font-size: 9px; letter-spacing: .4px; fill: #667060; text-anchor: middle; stroke-opacity: .4; stroke-width: 1px; }
.state { font: 11px "Liberation Sans", sans-serif; fill: #8b7897; }
.desert { font: italic 10.5px "Liberation Sans", sans-serif; fill: #777; }
.valley { font: 9.5px "Liberation Sans", sans-serif; fill: #777; }
.water { font: italic 9.5px "Liberation Sans", sans-serif; fill: #5d94b5; }
.zoomctl { position: absolute; left: 11px; top: 10px; width: 34px; height: 64px; border: 2px solid rgba(0,0,0,.22); border-radius: 4px; background: #fff; background-clip: padding-box; }
.zoomctl span { height: 29px; display: flex; align-items: center; justify-content: center; }
.zoomctl span:first-child { border-bottom: 1px solid #ccc; height: 31px; padding-top: 3px; }
.zoomctl svg { fill: none; stroke: #990000; stroke-width: 2.4; }
.scale { position: absolute; left: 5px; top: 539px; font-size: 9.5px; line-height: 14px; color: #333; }
.scale div { border: 2px solid #777; border-top: 0; padding-left: 5px; background: rgba(255,255,255,.5); }
.scale .km { width: 99px; height: 16px; }
.scale .mi { width: 80px; height: 14px; border-bottom: 0; line-height: 15px; }
.attrib { position: absolute; right: 0; bottom: 0; width: 240px; height: 20px; padding: 0 5px 0 4px; display: flex; align-items: center; justify-content: space-between; background: rgba(255,255,255,.8); font-size: 9.85px; white-space: nowrap; }

/* metadata table */
.table { display: flex; width: 1110px; height: 50px; margin: 3px 0 0 2px; border: 1px solid #ced4da; border-top-width: 2px; background: linear-gradient(#f1f1f1 40%, #e2e2e2 80%); font-weight: bold; }
.table > div { border-right: 1px solid #ced4da; padding: 13px 0 0 5px; white-space: nowrap; flex: none; font-size: 13.1px; }
.table > .tall { padding-top: 3px; }
.table sup { font-size: 9px; line-height: 0; vertical-align: 5px; }
.chev { width: 8px; height: 6px; vertical-align: 2px; }
.c0 { width: 23px; } .c1 { width: 91px; } .c2 { width: 87px; } .c3 { width: 91px; } .c4 { width: 122px; } .c5 { width: 116px; } .c6 { width: 101px; } .c7 { width: 71px; } .c8 { width: 94px; } .c9 { width: 297px; display: flex; }
.table > .c10 { flex: 1; border-right: 0; background: #f6f6f6; }
.table > .c9 { padding-top: 12px; }
.c9 button { width: 75px; height: 20px; margin-left: 55px; padding: 0; border: 0; background: #6c6c6c; color: #f5f5f5; font-size: 10.7px; font-weight: 400; line-height: 20px; }
.c9 button.dl { width: 97px; margin-left: 4px; }
.c9 em { display: inline-block; margin-left: 6px; vertical-align: 3px; border: 2.5px solid transparent; border-top: 3px solid #fff; border-bottom: 0; }
.window-edge { position: absolute; left: 0; bottom: 0; width: 1215px; height: 2px; background: #2d2c2f; }
```
